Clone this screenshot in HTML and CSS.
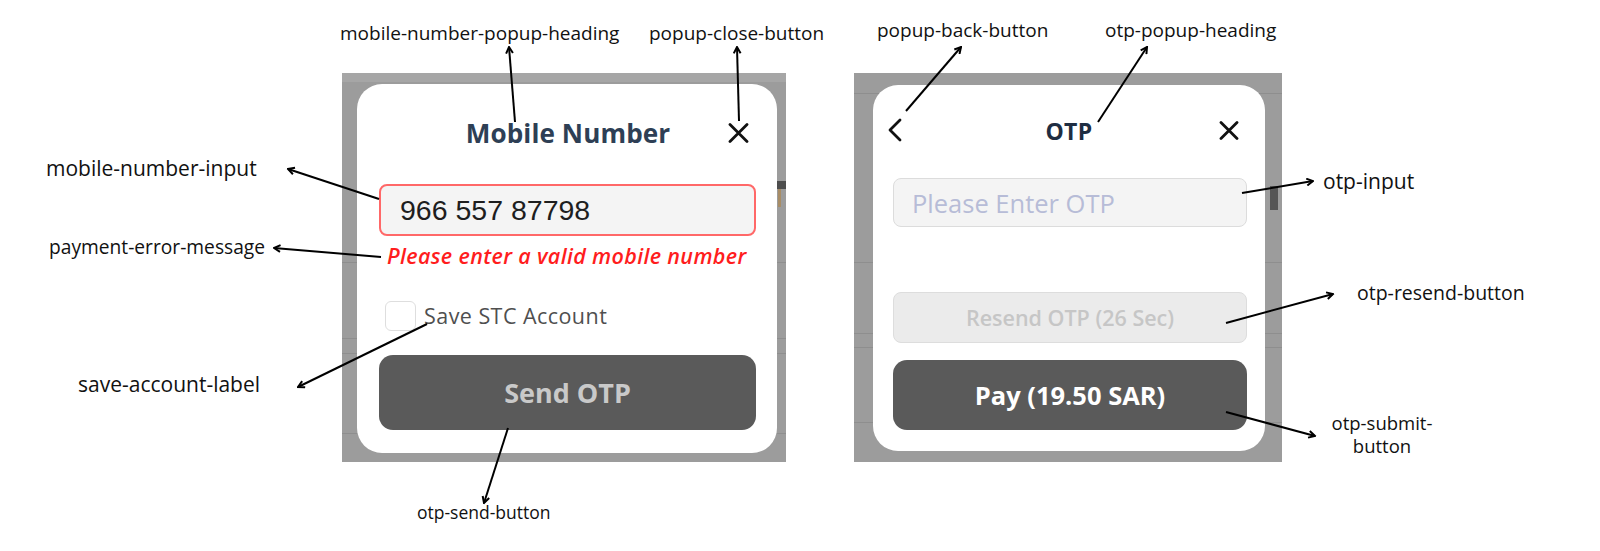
FILE: index.html
```html
<!DOCTYPE html>
<html lang="en">
<head>
<meta charset="utf-8">
<title>Payment popups annotated</title>
<link rel="stylesheet" href="styles.css">
</head>
<body>
<main class="stage">
  <section class="backdrop backdrop--mobile">
    <div class="card card--mobile">
      <div class="card-header header--mobile">
        <span class="icon-slot"></span>
        <h2 class="card-title">Mobile Number</h2>
        <span class="icon-slot icon-slot--end">
          <svg class="icon-close" viewBox="0 0 21 20" width="21" height="20"><path d="M2 1.5 L19 18.5 M19 1.5 L2 18.5" fill="none" stroke="#111" stroke-width="2.8" stroke-linecap="round"/></svg>
        </span>
      </div>
      <div class="field field--error">966 557 87798</div>
      <p class="error-msg">Please enter a valid mobile number</p>
      <div class="save-row">
        <span class="checkbox"></span>
        <span class="save-text">Save STC Account</span>
      </div>
      <div class="primary-btn send-btn">Send OTP</div>
    </div>
  </section>

  <section class="backdrop backdrop--otp">
    <div class="card card--otp">
      <div class="card-header header--otp">
        <span class="icon-slot">
          <svg class="icon-back" viewBox="0 0 15 24" width="15" height="24"><path d="M13 2 L3 12 L13 22" fill="none" stroke="#111" stroke-width="2.8" stroke-linecap="round" stroke-linejoin="round"/></svg>
        </span>
        <h2 class="card-title card-title--otp">OTP</h2>
        <span class="icon-slot icon-slot--end">
          <svg class="icon-close" viewBox="0 0 20 19" width="20" height="19"><path d="M2 1.5 L18 17.5 M18 1.5 L2 17.5" fill="none" stroke="#111" stroke-width="2.8" stroke-linecap="round"/></svg>
        </span>
      </div>
      <div class="field field--otp">Please Enter OTP</div>
      <div class="resend-btn">Resend OTP (26 Sec)</div>
      <div class="primary-btn pay-btn">Pay (19.50 SAR)</div>
    </div>
  </section>
</main>

<div class="note note--top note-heading">mobile-number-popup-heading</div>
<div class="note note--top note-close">popup-close-button</div>
<div class="note note--top note-back">popup-back-button</div>
<div class="note note--top note-otp-heading">otp-popup-heading</div>
<div class="note note--side note-mobile-input">mobile-number-input</div>
<div class="note note--side note-error">payment-error-message</div>
<div class="note note--side note-save">save-account-label</div>
<div class="note note--side note-otp-input">otp-input</div>
<div class="note note--side note-resend">otp-resend-button</div>
<div class="note note--side note-submit"><span class="note-line">otp-submit-</span><span class="note-line">button</span></div>
<div class="note note--bottom note-send">otp-send-button</div>

<svg class="arrows" viewBox="0 0 1600 551" width="1600" height="551">
  <defs>
    <marker id="head" viewBox="0 0 10 10" refX="8.5" refY="5" markerWidth="9" markerHeight="9" markerUnits="userSpaceOnUse" orient="auto">
      <path d="M1.5 1.2 L8.5 5 L1.5 8.8" fill="none" stroke="#000" stroke-width="2.2" stroke-linejoin="miter"/>
    </marker>
  </defs>
  <g stroke="#000" stroke-width="2" fill="none" marker-end="url(#head)">
    <line x1="515" y1="122" x2="509" y2="47"/>
    <line x1="739" y1="121" x2="737" y2="47"/>
    <line x1="906" y1="111" x2="961" y2="47"/>
    <line x1="1098" y1="122" x2="1147" y2="47"/>
    <line x1="379" y1="199" x2="288" y2="169"/>
    <line x1="381" y1="257" x2="274" y2="248"/>
    <line x1="427" y1="324" x2="298" y2="387"/>
    <line x1="508" y1="428" x2="484" y2="503"/>
    <line x1="1242" y1="193" x2="1313" y2="181"/>
    <line x1="1226" y1="323" x2="1333" y2="294"/>
    <line x1="1226" y1="412" x2="1315" y2="436"/>
  </g>
</svg>
</body>
</html>
```

FILE: styles.css
```css
* { box-sizing: border-box; }

html, body {
  margin: 0;
  padding: 0;
  background: #ffffff;
}

body {
  position: relative;
  width: 1600px;
  height: 551px;
  overflow: hidden;
  font-family: "Open Sans", "Noto Sans", sans-serif;
}

.stage {
  display: flex;
  align-items: flex-start;
  gap: 68px;
  padding: 73px 0 0 342px;
}

/* dimmed page behind each popup */
.backdrop {
  height: 389px;
  background-color: #9c9c9c;
  background-repeat: no-repeat;
}

.backdrop--mobile {
  width: 444px;
  padding: 11px 9px 9px 15px;
  background-image:
    linear-gradient(#a6a6a6, #a6a6a6),
    linear-gradient(#8e8e8e, #8e8e8e),
    linear-gradient(#8e8e8e, #8e8e8e),
    linear-gradient(#8e8e8e, #8e8e8e),
    linear-gradient(#8e8e8e, #8e8e8e),
    linear-gradient(#4d4d4d, #4d4d4d),
    linear-gradient(#a88d66, #a88d66);
  background-size:
    100% 9px,
    100% 1px,
    100% 1px,
    100% 1px,
    100% 1px,
    9px 8px,
    3px 18px;
  background-position:
    0 0,
    0 189px,
    0 265px,
    0 280px,
    0 360px,
    435px 108px,
    436px 116px;
}

.backdrop--otp {
  width: 428px;
  padding: 12px 17px 11px 19px;
  background-image:
    linear-gradient(#8e8e8e, #8e8e8e),
    linear-gradient(#8e8e8e, #8e8e8e),
    linear-gradient(#8e8e8e, #8e8e8e),
    linear-gradient(#8e8e8e, #8e8e8e),
    linear-gradient(#8e8e8e, #8e8e8e),
    linear-gradient(#555555, #555555);
  background-size:
    100% 1px,
    100% 1px,
    100% 1px,
    100% 1px,
    100% 1px,
    8px 24px;
  background-position:
    0 20px,
    0 189px,
    0 260px,
    0 274px,
    0 349px,
    416px 113px;
}

.card {
  display: flex;
  flex-direction: column;
  background: #ffffff;
  border-radius: 25px;
}

.card--mobile {
  width: 420px;
  height: 369px;
  padding: 0 21px 23px 22px;
}

.card--otp {
  width: 392px;
  height: 366px;
  padding: 0 18px 21px 20px;
}

.card-header {
  display: grid;
  grid-template-columns: 1fr auto 1fr;
  align-items: center;
}

.header--mobile {
  height: 98px;
  margin: 0 -1px 0 0;
}

.header--mobile .icon-slot--end { padding-right: 8px; }

.header--otp {
  height: 90px;
  margin: 0 -4px 0 -6px;
}

.header--otp .icon-slot--end { padding-right: 12px; }

.icon-slot {
  display: flex;
  align-items: center;
}

.icon-slot--end { justify-content: flex-end; }

.icon-close, .icon-back { display: block; }

.card-title {
  margin: 0;
  font-size: 26.1px;
  font-weight: 700;
  color: #2e3f55;
  line-height: 1;
  letter-spacing: 0.1px;
}

.card-title--otp {
  font-size: 23px;
  color: #1e2d42;
  padding-top: 2px;
  letter-spacing: 0.3px;
}

.field {
  display: flex;
  align-items: center;
  background: #f4f4f4;
  border-radius: 8px;
}

.field--error {
  height: 52px;
  margin-top: 2px;
  padding-left: 19px;
  border: 2px solid #ff6868;
  font-family: "Liberation Sans", Arial, sans-serif;
  font-size: 28.5px;
  color: #1e1e1e;
  padding-top: 1px;
}

.field--otp {
  height: 49px;
  margin-top: 3px;
  padding-left: 18px;
  border: 1.5px solid #dcdcdc;
  font-size: 25.5px;
  color: #b7bcd7;
}

.error-msg {
  margin: 6px 0 0 8px;
  font-size: 21.5px;
  line-height: 28px;
  font-weight: 600;
  font-style: italic;
  color: #ff1d1d;
  letter-spacing: 0.35px;
  white-space: nowrap;
}

.save-row {
  display: flex;
  align-items: center;
  gap: 8px;
  margin: 31px 0 0 6px;
}

.checkbox {
  width: 31px;
  height: 30px;
  border: 1.5px solid #dedede;
  border-radius: 6px;
  background: #fff;
}

.save-text {
  font-size: 21.5px;
  color: #4f4f4f;
  line-height: 1;
  letter-spacing: 0.45px;
}

.primary-btn {
  display: flex;
  align-items: center;
  justify-content: center;
  background: #5a5a5a;
  border-radius: 14px;
  font-weight: 700;
}

.send-btn {
  height: 75px;
  margin-top: 24px;
  font-size: 27px;
  color: #c9c9c9;
}

.resend-btn {
  display: flex;
  align-items: center;
  justify-content: center;
  height: 51px;
  margin-top: 65px;
  background: #ebebeb;
  border: 1.5px solid #dddddd;
  border-radius: 8px;
  font-size: 21.5px;
  font-weight: 600;
  color: #c6c6c6;
}

.pay-btn {
  height: 70px;
  margin-top: 17px;
  font-size: 25.5px;
  color: #ffffff;
}

/* annotation labels placed on the diagram canvas */
.note {
  position: absolute;
  line-height: 1;
  color: #111111;
  white-space: nowrap;
  font-family: "Open Sans", "Noto Sans", sans-serif;
}

.note--top { font-size: 19px; }
.note--side { font-size: 19.5px; }
.note--bottom { font-size: 17.5px; }

.note-heading { left: 340px; top: 24px; }
.note-close { left: 649px; top: 24px; }
.note-back { left: 877px; top: 21px; }
.note-otp-heading { left: 1105px; top: 21px; }
.note-mobile-input { left: 46px; top: 158px; font-size: 21px; }
.note-error { left: 49px; top: 237px; font-size: 19.2px; }
.note-save { left: 78px; top: 374px; font-size: 21px; }
.note-otp-input { left: 1323px; top: 171px; font-size: 21px; }
.note-resend { left: 1357px; top: 283px; }
.note-submit {
  left: 1322px;
  top: 410px;
  width: 120px;
  display: flex;
  flex-direction: column;
  align-items: center;
  gap: 0;
  font-size: 18.5px;
}
.note-line {
  display: block;
  line-height: 25.2px;
  height: 23px;
  overflow: visible;
}
.note-send { left: 417px; top: 504px; }

.arrows {
  position: absolute;
  left: 0;
  top: 0;
  pointer-events: none;
}
```
